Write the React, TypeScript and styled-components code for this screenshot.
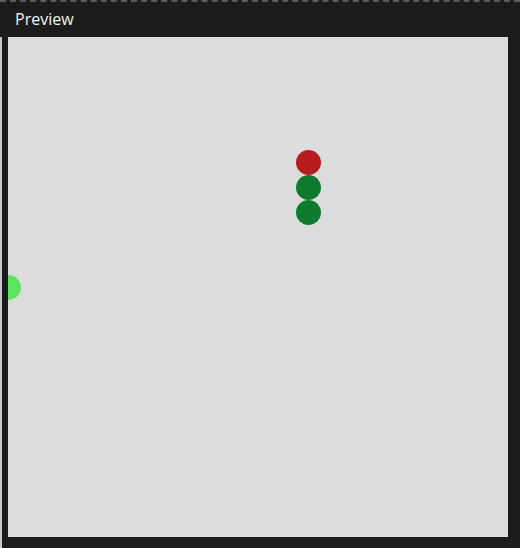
import styled, { createGlobalStyle } from "styled-components";

const GlobalStyle = createGlobalStyle`
  html, body {
    margin: 0;
    padding: 0;
    background: #1c1c1c;
  }
  * {
    box-sizing: border-box;
  }
`;

type Dot = { x: number; y: number; color: string };

// positions on the 500x500 canvas (centres)
const dots: Dot[] = [
  { x: 300, y: 125, color: "#b71c1c" },
  { x: 300, y: 150, color: "#0e7a2b" },
  { x: 300, y: 175, color: "#0e7a2b" },
  { x: 0, y: 250, color: "#5fe35f" },
];

export default function App() {
  return (
    <>
      <GlobalStyle />
      <Panel>
        <Header>
          <Title>Preview</Title>
        </Header>
        <Body>
          <Canvas>
            {dots.map((d, i) => (
              <Circle
                key={i}
                $color={d.color}
                style={{ left: d.x - 12.5, top: d.y - 12.5 }}
              />
            ))}
          </Canvas>
        </Body>
      </Panel>
    </>
  );
}

const Panel = styled.div`
  width: 520px;
  height: 548px;
  display: flex;
  flex-direction: column;
  background: #1c1c1c;
  border-top: 2px dashed #5a5a5a;
  overflow: hidden;
`;

const Header = styled.div`
  height: 35px;
  display: flex;
  align-items: center;
  padding: 0 15px;
  flex-shrink: 0;
`;

const Title = styled.span`
  font-family: "Open Sans", "Liberation Sans", sans-serif;
  font-size: 16px;
  color: #f2f2f2;
  margin-top: -2px;
`;

const Body = styled.div`
  flex: 1;
  border-left: 2px solid #c9c9c9;
  padding-left: 6px;
`;

const Canvas = styled.div`
  position: relative;
  width: 500px;
  height: 500px;
  background: #dcdcdc;
  overflow: hidden;
`;

const Circle = styled.div<{ $color: string }>`
  position: absolute;
  width: 25px;
  height: 25px;
  border-radius: 50%;
  background: ${(p) => p.$color};
`;
